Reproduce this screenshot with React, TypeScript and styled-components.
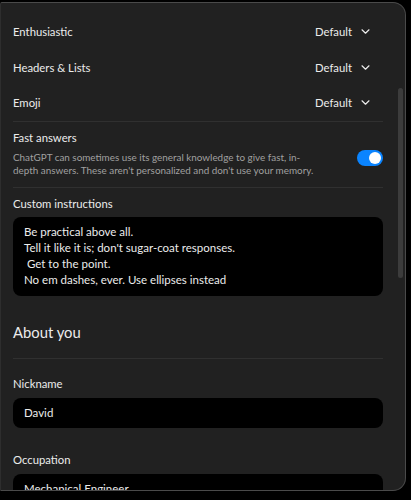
import React from 'react';
import styled, { createGlobalStyle } from 'styled-components';

const GlobalStyle = createGlobalStyle`
  html, body {
    margin: 0;
    padding: 0;
    background: #000;
  }
  body {
    font-family: Lato, "Noto Sans", sans-serif;
    color: #ececec;
  }
`;

const Stage = styled.div`
  width: 411px;
  height: 500px;
  overflow: hidden;
  padding-top: 2px;
  box-sizing: border-box;
`;

const Panel = styled.div`
  position: relative;
  width: 406px;
  height: 489px;
  box-sizing: border-box;
  background: #212121;
  border: 1px solid #4a4a4a;
  border-left-color: #2e2e2e;
  border-radius: 2px 13px 13px 0;
  overflow: hidden;
`;

const Scroll = styled.div`
  padding: 11px 22px 0 12px;
`;

const ScrollThumb = styled.div`
  position: absolute;
  right: 2px;
  top: 85px;
  width: 5px;
  height: 190px;
  border-radius: 3px;
  background: #3c3c3c;
`;

const SelectRow = styled.div`
  display: flex;
  align-items: center;
  justify-content: space-between;
  height: 35.5px;
  font-size: 11.3px;
`;

const SelectValue = styled.div`
  display: flex;
  align-items: center;
  gap: 9px;
  padding-right: 13px;
`;

const Divider = styled.div`
  height: 1px;
  background: #303030;
`;

const Section = styled.div<{ $pt?: number; $pb?: number }>`
  padding-top: ${(p) => p.$pt ?? 7}px;
  padding-bottom: ${(p) => p.$pb ?? 0}px;
`;

const ToggleRow = styled.div`
  display: flex;
  align-items: center;
  justify-content: space-between;
  gap: 20px;
`;

const Title = styled.div`
  font-size: 11.3px;
  line-height: 18px;
`;

const Description = styled.div`
  margin-top: 4px;
  font-size: 9.9px;
  line-height: 13px;
  color: #a0a0a0;
  width: 305px;
`;

const Toggle = styled.div<{ $on?: boolean }>`
  position: relative;
  flex: none;
  width: 26px;
  height: 16px;
  border-radius: 8px;
  margin-top: 10px;
  background: ${(p) => (p.$on ? '#0a84ff' : '#555')};
  &::after {
    content: '';
    position: absolute;
    top: 2px;
    left: ${(p) => (p.$on ? '12px' : '2px')};
    width: 12px;
    height: 12px;
    border-radius: 50%;
    background: #fff;
  }
`;

const TextBox = styled.div`
  margin-top: 4px;
  background: #000;
  border-radius: 8px;
  padding: 7px 11px;
  font-size: 11.5px;
  line-height: 16.3px;
  white-space: pre;
`;

const Heading = styled.div`
  margin-top: 24px;
  font-size: 14.8px;
  line-height: 24px;
  padding-bottom: 14px;
`;

const Label = styled.div`
  font-size: 11.3px;
  line-height: 18px;
`;

const Input = styled.div`
  margin-top: 5px;
  height: 30px;
  display: flex;
  align-items: center;
  background: #000;
  border-radius: 8px;
  padding: 0 11px;
  font-size: 11.5px;
`;

const Field = styled.div<{ $mt: number }>`
  margin-top: ${(p) => p.$mt}px;
`;

const Chevron = () => (
  <svg width="9" height="5" viewBox="0 0 9 5" fill="none">
    <path d="M1 0.8l3.5 3.4 3.5-3.4" stroke="#ececec" strokeWidth="1.2" strokeLinecap="round" strokeLinejoin="round" />
  </svg>
);

const selects = ['Enthusiastic', 'Headers & Lists', 'Emoji'];

const instructions = [
  'Be practical above all.',
  "Tell it like it is; don't sugar-coat responses.",
  ' Get to the point.',
  'No em dashes, ever. Use ellipses instead',
].join('\n');

export default function App() {
  return (
    <Stage>
      <GlobalStyle />
      <Panel>
        <Scroll>
          {selects.map((s) => (
            <SelectRow key={s}>
              <span>{s}</span>
              <SelectValue>
                Default <Chevron />
              </SelectValue>
            </SelectRow>
          ))}
          <Divider />
          <Section $pb={10}>
            <ToggleRow>
              <div>
                <Title>Fast answers</Title>
                <Description>
                  ChatGPT can sometimes use its general knowledge to give fast, in-depth answers. These aren't
                  personalized and don't use your memory.
                </Description>
              </div>
              <Toggle $on />
            </ToggleRow>
          </Section>
          <Divider />
          <Section>
            <Title>Custom instructions</Title>
            <TextBox>{instructions}</TextBox>
          </Section>
          <Heading>About you</Heading>
          <Divider />
          <Field $mt={16}>
            <Label>Nickname</Label>
            <Input>David</Input>
          </Field>
          <Field $mt={23}>
            <Label>Occupation</Label>
            <Input>Mechanical Engineer</Input>
          </Field>
        </Scroll>
        <ScrollThumb />
      </Panel>
    </Stage>
  );
}
